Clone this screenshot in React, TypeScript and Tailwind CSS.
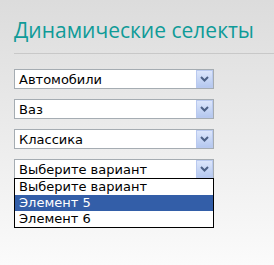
import React from "react";

function Arrow() {
  return (
    <div className="w-[17px] h-[18px] shrink-0 border border-[#b9c9ef] bg-gradient-to-b from-[#dce6fb] to-[#b5c8ef] flex items-center justify-center">
      <svg width="9" height="6" viewBox="0 0 9 6">
        <path d="M1 1 L4.5 4.5 L8 1" fill="none" stroke="#4d6185" strokeWidth="2" />
      </svg>
    </div>
  );
}

function Select({ label }: { label: string }) {
  return (
    <div className="w-[200px] h-[20px] border border-[#a5acb2] bg-white flex items-stretch">
      <div className="flex-1 pl-[4px] pt-[2px] text-[13px] leading-[16px] text-black whitespace-nowrap overflow-hidden">
        {label}
      </div>
      <Arrow />
    </div>
  );
}

export default function App() {
  return (
    <div
      className="w-[274px] h-[265px] bg-gradient-to-b from-[#dcdcdc] to-[#fbfbfb] overflow-hidden"
      style={{ fontFamily: '"DejaVu Sans", sans-serif' }}
    >
      <div className="pl-[14px] pt-[15px]">
        <h1
          className="text-[21px] leading-[30px] text-[#0f9b98]"
          style={{ fontFamily: '"Open Sans", sans-serif' }}
        >
          Динамические селекты
        </h1>
        <div className="mt-[8px] h-px bg-[#c8c8c8]" />
        <div className="mt-[15px] flex flex-col gap-[10px]">
          <Select label="Автомобили" />
          <Select label="Ваз" />
          <Select label="Классика" />
          <div className="relative">
            <Select label="Выберите вариант" />
            <div className="absolute left-0 top-[19px] w-[200px] border border-black bg-white text-[13px] leading-[16px] text-black">
              <div className="pl-[4px]">Выберите вариант</div>
              <div className="pl-[4px] bg-[#335ea8] text-white">Элемент 5</div>
              <div className="pl-[4px]">Элемент 6</div>
            </div>
          </div>
        </div>
      </div>
    </div>
  );
}
